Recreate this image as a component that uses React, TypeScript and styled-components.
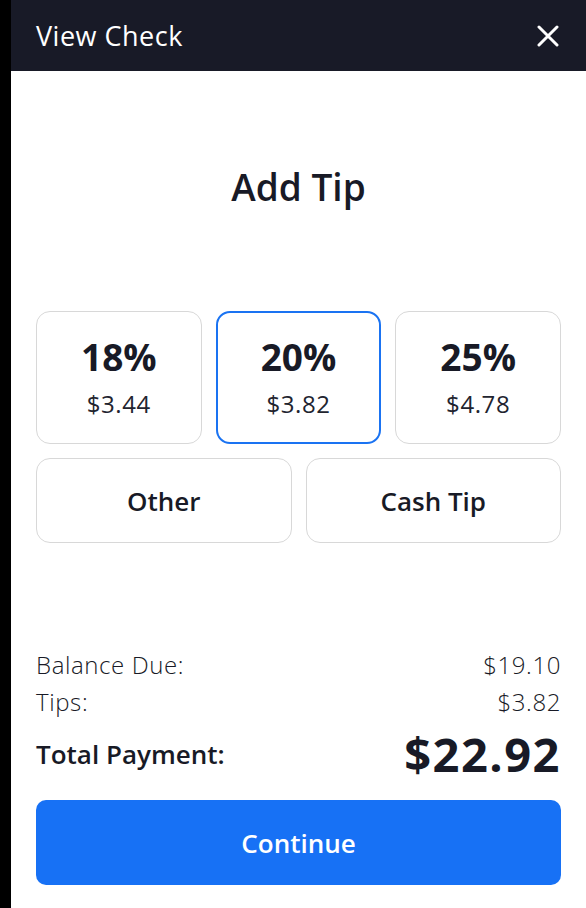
import React, { FC, useState } from "react";
import styled, { createGlobalStyle } from "styled-components";

const GlobalStyle = createGlobalStyle`
  html, body {
    margin: 0;
    padding: 0;
    background: #000;
  }
  body {
    font-family: "Open Sans", Lato, "Liberation Sans", sans-serif;
    color: #181a26;
  }
`;

const Frame = styled.div`
  display: flex;
  height: 908px;
  width: 586px;
  background: #000;
`;

const Panel = styled.div`
  flex: 1;
  margin-left: 11px;
  display: flex;
  flex-direction: column;
  background: #fff;
`;

const Header = styled.header`
  height: 71px;
  background: #181a27;
  display: flex;
  align-items: center;
  justify-content: space-between;
  padding: 0 26px 0 25px;
  box-sizing: border-box;
`;

const HeaderTitle = styled.h1`
  margin: 0;
  color: #fff;
  font-size: 27px;
  font-weight: 400;
  letter-spacing: 0.5px;
`;

const CloseButton = styled.button`
  all: unset;
  cursor: pointer;
  display: flex;
  width: 24px;
  height: 24px;
  align-items: center;
  justify-content: center;
`;

const Body = styled.main`
  flex: 1;
  display: flex;
  flex-direction: column;
  padding: 0 25px 23px;
`;

const Title = styled.h2`
  margin: 96px 0 0;
  text-align: center;
  font-size: 37px;
  font-weight: 600;
  line-height: 40px;
`;

const TipGrid = styled.div`
  margin-top: 104px;
  display: grid;
  grid-template-columns: repeat(3, 1fr);
  gap: 14px;
`;

const OtherGrid = styled.div`
  margin-top: 14px;
  display: grid;
  grid-template-columns: repeat(2, 1fr);
  gap: 14px;
`;

const Card = styled.button<{ selected?: boolean; tall?: boolean }>`
  all: unset;
  cursor: pointer;
  box-sizing: border-box;
  height: ${(p) => (p.tall ? "133px" : "85px")};
  border-radius: 14px;
  border: ${(p) => (p.selected ? "2.5px solid #1a73f2" : "1.5px solid #d8d8d8")};
  display: flex;
  flex-direction: column;
  align-items: center;
  justify-content: center;
  color: #181a26;
`;

const Percent = styled.span`
  font-size: 37px;
  font-weight: 700;
  line-height: 40px;
`;

const Amount = styled.span`
  margin-top: 13px;
  font-size: 24px;
  font-weight: 400;
  line-height: 28px;
  letter-spacing: 0.6px;
  color: #22242f;
`;

const CardLabel = styled.span`
  font-size: 26px;
  font-weight: 600;
`;

const Summary = styled.section`
  margin-top: auto;
  display: flex;
  flex-direction: column;
`;

const Row = styled.div`
  display: flex;
  justify-content: space-between;
  align-items: center;
  font-size: 24px;
  font-weight: 300;
  line-height: 37px;
  letter-spacing: 0.6px;
`;

const TotalRow = styled.div`
  display: flex;
  justify-content: space-between;
  align-items: center;
  margin-top: 7px;
`;

const TotalLabel = styled.span`
  font-size: 26px;
  font-weight: 600;
`;

const TotalValue = styled.span`
  font-size: 47px;
  font-weight: 700;
  line-height: 54px;
  letter-spacing: 1.5px;
`;

const ContinueButton = styled.button`
  all: unset;
  cursor: pointer;
  margin-top: 19px;
  height: 85px;
  border-radius: 10px;
  background: #1771f5;
  color: #fff;
  font-size: 26px;
  font-weight: 600;
  display: flex;
  align-items: center;
  justify-content: center;
`;

const tips = [
  { pct: 18, amount: "$3.44" },
  { pct: 20, amount: "$3.82" },
  { pct: 25, amount: "$4.78" },
];

const App: FC = () => {
  const [selected, setSelected] = useState(20);
  return (
    <>
      <GlobalStyle />
      <Frame>
        <Panel>
          <Header>
            <HeaderTitle>View Check</HeaderTitle>
            <CloseButton aria-label="Close">
              <svg width="22" height="22" viewBox="0 0 22 22">
                <path
                  d="M2 2 L20 20 M20 2 L2 20"
                  stroke="#fff"
                  strokeWidth="3"
                  strokeLinecap="round"
                />
              </svg>
            </CloseButton>
          </Header>
          <Body>
            <Title>Add Tip</Title>
            <TipGrid>
              {tips.map((t) => (
                <Card
                  key={t.pct}
                  tall
                  selected={selected === t.pct}
                  onClick={() => setSelected(t.pct)}
                >
                  <Percent>{t.pct}%</Percent>
                  <Amount>{t.amount}</Amount>
                </Card>
              ))}
            </TipGrid>
            <OtherGrid>
              <Card>
                <CardLabel>Other</CardLabel>
              </Card>
              <Card>
                <CardLabel>Cash Tip</CardLabel>
              </Card>
            </OtherGrid>
            <Summary>
              <Row>
                <span>Balance Due:</span>
                <span>$19.10</span>
              </Row>
              <Row>
                <span>Tips:</span>
                <span>$3.82</span>
              </Row>
              <TotalRow>
                <TotalLabel>Total Payment:</TotalLabel>
                <TotalValue>$22.92</TotalValue>
              </TotalRow>
              <ContinueButton>Continue</ContinueButton>
            </Summary>
          </Body>
        </Panel>
      </Frame>
    </>
  );
};

export default App;
